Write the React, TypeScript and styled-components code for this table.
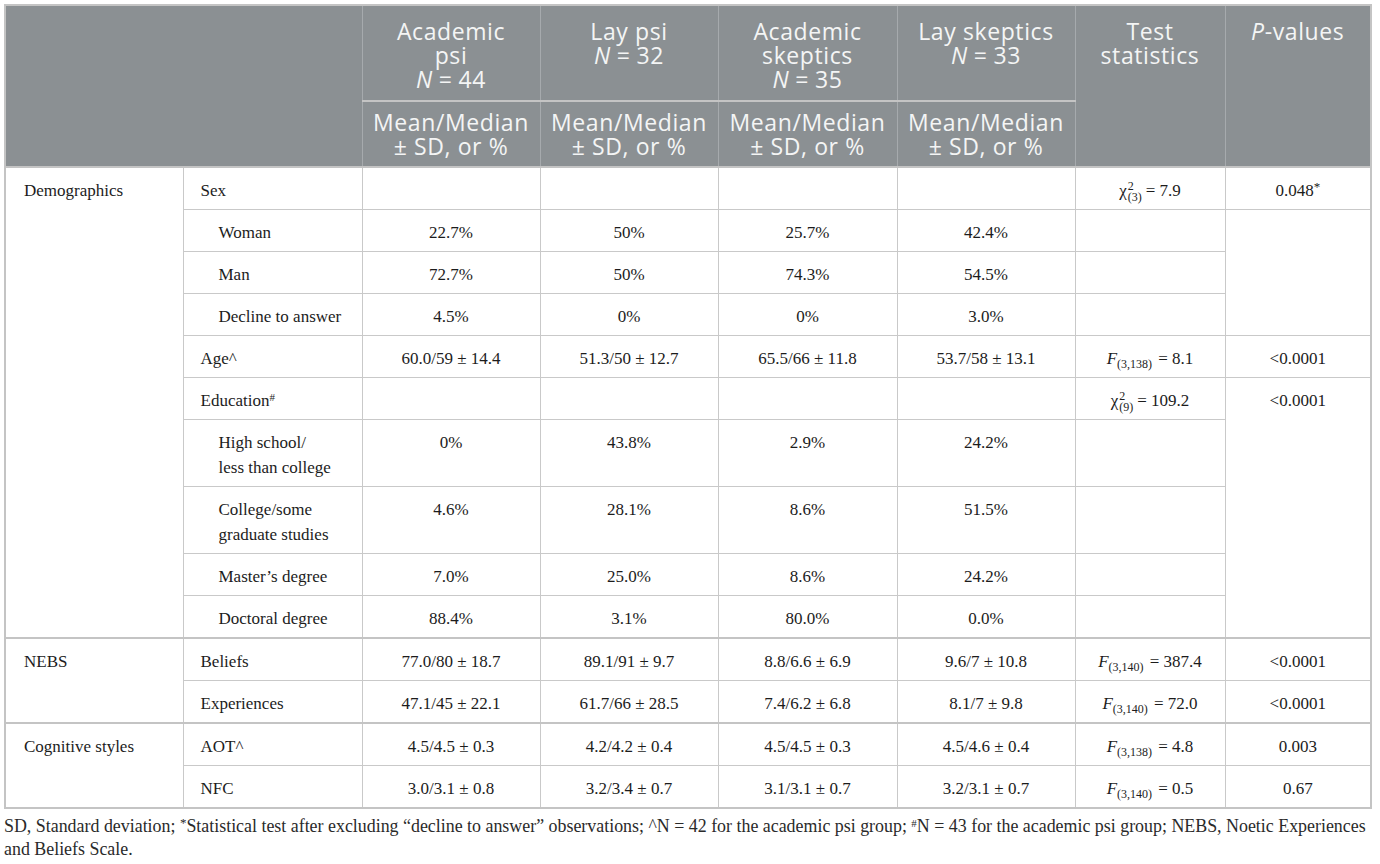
import React from "react";
import styled, { createGlobalStyle, css } from "styled-components";

const Global = createGlobalStyle`
  html, body { margin: 0; padding: 0; background: #ffffff; }
  body { font-family: "Liberation Serif", "Times New Roman", serif; color: #1c1c1c; }
`;

const Page = styled.div`
  padding: 4px 0 0 4px;
  width: 1372px;
`;

const Table = styled.table`
  border-collapse: collapse;
  table-layout: fixed;
  width: 1366px;
  border: 2px solid #c4c4c4;
`;

const HeadRow = styled.tr<{ $h: number; $last?: boolean }>`
  height: ${(p) => p.$h}px;
  ${(p) =>
    p.$last &&
    css`
      th {
        border-bottom: 2px solid #c4c4c4;
      }
    `}
`;

const Th = styled.th<{ $pt?: number }>`
  background: #8b9093;
  color: #f4f5f5;
  font-family: "Open Sans", "Liberation Sans", sans-serif;
  font-weight: 400;
  font-size: 23px;
  line-height: 24px;
  letter-spacing: 0.6px;
  text-align: center;
  vertical-align: top;
  padding: ${(p) => p.$pt ?? 13}px 2px 0 2px;
  border: 1px solid #a6aaad;
  border-bottom: 2px solid #c4c4c4;
`;

const Eq = styled.span`
  margin: 0 6px;
`;

const Row = styled.tr<{ $group?: boolean }>`
  ${(p) =>
    p.$group &&
    css`
      td {
        border-top: 2px solid #c4c4c4;
      }
    `}
`;

const Td = styled.td<{ $align?: "left" | "center"; $indent?: boolean; $first?: boolean }>`
  font-size: 17px;
  line-height: 25px;
  color: #1c1c1c;
  vertical-align: top;
  text-align: ${(p) => p.$align ?? "center"};
  padding: 10px 6px 6px ${(p) => (p.$first ? 18 : p.$indent ? 35 : p.$align === "left" ? 17 : 6)}px;
  border: 1px solid #c9c9c9;
  white-space: nowrap;
`;

const Ital = styled.i`
  font-style: italic;
`;

const Stack = styled.span`
  display: inline-flex;
  flex-direction: column;
  align-items: flex-start;
  vertical-align: 6px;
  font-size: 12px;
  line-height: 11px;
  margin: -10px 4px -10px 1px;
`;

const Sub = styled.sub`
  font-size: 12px;
  line-height: 0;
  vertical-align: -4px;
  margin-right: 2px;
`;

const Sup = styled.sup<{ $size?: number }>`
  font-size: ${(p) => p.$size ?? 11}px;
  line-height: 0;
  vertical-align: 5px;
`;

const Foot = styled.p`
  margin: 6px 0 0 0;
  width: 1372px;
  font-size: 17.9px;
  line-height: 23px;
  color: #2a2a2a;
  white-space: nowrap;
`;

const Chi = ({ df, value }: { df: string; value: string }) => (
  <>
    χ
    <Stack>
      <span>2</span>
      <span>({df})</span>
    </Stack>
    = {value}
  </>
);

const F = ({ df, value }: { df: string; value: string }) => (
  <>
    <Ital>F</Ital>
    <Sub>({df})</Sub> = {value}
  </>
);

const groups = [
  { label: "Academic", label2: "psi", n: "44" },
  { label: "Lay psi", n: "32" },
  { label: "Academic", label2: "skeptics", n: "35" },
  { label: "Lay skeptics", n: "33" },
];

type DataRow = {
  label: React.ReactNode;
  indent?: boolean;
  vals: string[];
  stat?: React.ReactNode;
  p?: React.ReactNode;
  pSpan?: number;
  skipP?: boolean;
};

const demo: DataRow[] = [
  { label: "Sex", vals: ["", "", "", ""], stat: <Chi df="3" value="7.9" />, p: <>0.048<Sup $size={13}>*</Sup></> },
  { label: "Woman", indent: true, vals: ["22.7%", "50%", "25.7%", "42.4%"], p: "", pSpan: 3 },
  { label: "Man", indent: true, vals: ["72.7%", "50%", "74.3%", "54.5%"], skipP: true },
  { label: "Decline to answer", indent: true, vals: ["4.5%", "0%", "0%", "3.0%"], skipP: true },
  {
    label: "Age^",
    vals: ["60.0/59 ± 14.4", "51.3/50 ± 12.7", "65.5/66 ± 11.8", "53.7/58 ± 13.1"],
    stat: <F df="3,138" value="8.1" />,
    p: "<0.0001",
  },
  {
    label: <>Education<Sup>#</Sup></>,
    vals: ["", "", "", ""],
    stat: <Chi df="9" value="109.2" />,
    p: "<0.0001",
    pSpan: 5,
  },
  { label: <>High school/<br />less than college</>, indent: true, vals: ["0%", "43.8%", "2.9%", "24.2%"], skipP: true },
  { label: <>College/some<br />graduate studies</>, indent: true, vals: ["4.6%", "28.1%", "8.6%", "51.5%"], skipP: true },
  { label: "Master’s degree", indent: true, vals: ["7.0%", "25.0%", "8.6%", "24.2%"], skipP: true },
  { label: "Doctoral degree", indent: true, vals: ["88.4%", "3.1%", "80.0%", "0.0%"], skipP: true },
];

const nebs: DataRow[] = [
  {
    label: "Beliefs",
    vals: ["77.0/80 ± 18.7", "89.1/91 ± 9.7", "8.8/6.6 ± 6.9", "9.6/7 ± 10.8"],
    stat: <F df="3,140" value="387.4" />,
    p: "<0.0001",
  },
  {
    label: "Experiences",
    vals: ["47.1/45 ± 22.1", "61.7/66 ± 28.5", "7.4/6.2 ± 6.8", "8.1/7 ± 9.8"],
    stat: <F df="3,140" value="72.0" />,
    p: "<0.0001",
  },
];

const cog: DataRow[] = [
  {
    label: "AOT^",
    vals: ["4.5/4.5 ± 0.3", "4.2/4.2 ± 0.4", "4.5/4.5 ± 0.3", "4.5/4.6 ± 0.4"],
    stat: <F df="3,138" value="4.8" />,
    p: "0.003",
  },
  {
    label: "NFC",
    vals: ["3.0/3.1 ± 0.8", "3.2/3.4 ± 0.7", "3.1/3.1 ± 0.7", "3.2/3.1 ± 0.7"],
    stat: <F df="3,140" value="0.5" />,
    p: "0.67",
  },
];

const Group = ({ title, rows }: { title: string; rows: DataRow[] }) => (
  <>
    {rows.map((r, i) => (
      <Row key={i} $group={i === 0}>
        {i === 0 && (
          <Td $align="left" $first rowSpan={rows.length}>
            {title}
          </Td>
        )}
        <Td $align="left" $indent={r.indent}>
          {r.label}
        </Td>
        {r.vals.map((v, j) => (
          <Td key={j}>{v}</Td>
        ))}
        <Td>{r.stat ?? ""}</Td>
        {!r.skipP && <Td rowSpan={r.pSpan ?? 1}>{r.p}</Td>}
      </Row>
    ))}
  </>
);

export default function App() {
  return (
    <Page>
      <Global />
      <Table>
        <colgroup>
          <col style={{ width: 178 }} />
          <col style={{ width: 179 }} />
          <col style={{ width: 178 }} />
          <col style={{ width: 178 }} />
          <col style={{ width: 179 }} />
          <col style={{ width: 178 }} />
          <col style={{ width: 150 }} />
          <col style={{ width: 146 }} />
        </colgroup>
        <thead>
          <HeadRow $h={96}>
            <Th colSpan={2} rowSpan={2} />
            {groups.map((g, i) => (
              <Th key={i}>
                {g.label}
                {g.label2 && (
                  <>
                    <br />
                    {g.label2}
                  </>
                )}
                <br />
                <Ital>N</Ital>
                <Eq>=</Eq>
                {g.n}
              </Th>
            ))}
            <Th rowSpan={2}>
              Test
              <br />
              statistics
            </Th>
            <Th rowSpan={2}>
              <Ital>P</Ital>-values
            </Th>
          </HeadRow>
          <HeadRow $h={66} $last>
            {groups.map((_, i) => (
              <Th key={i} $pt={8}>
                Mean/Median
                <br />± SD, or %
              </Th>
            ))}
          </HeadRow>
        </thead>
        <tbody>
          <Group title="Demographics" rows={demo} />
          <Group title="NEBS" rows={nebs} />
          <Group title="Cognitive styles" rows={cog} />
        </tbody>
      </Table>
      <Foot>
        SD, Standard deviation; <Sup $size={13}>*</Sup>Statistical test after excluding “decline to answer” observations; ^N = 42
        for the academic psi group; <Sup>#</Sup>N = 43 for the academic psi group; NEBS, Noetic Experiences
        <br />
        and Beliefs Scale.
      </Foot>
    </Page>
  );
}
